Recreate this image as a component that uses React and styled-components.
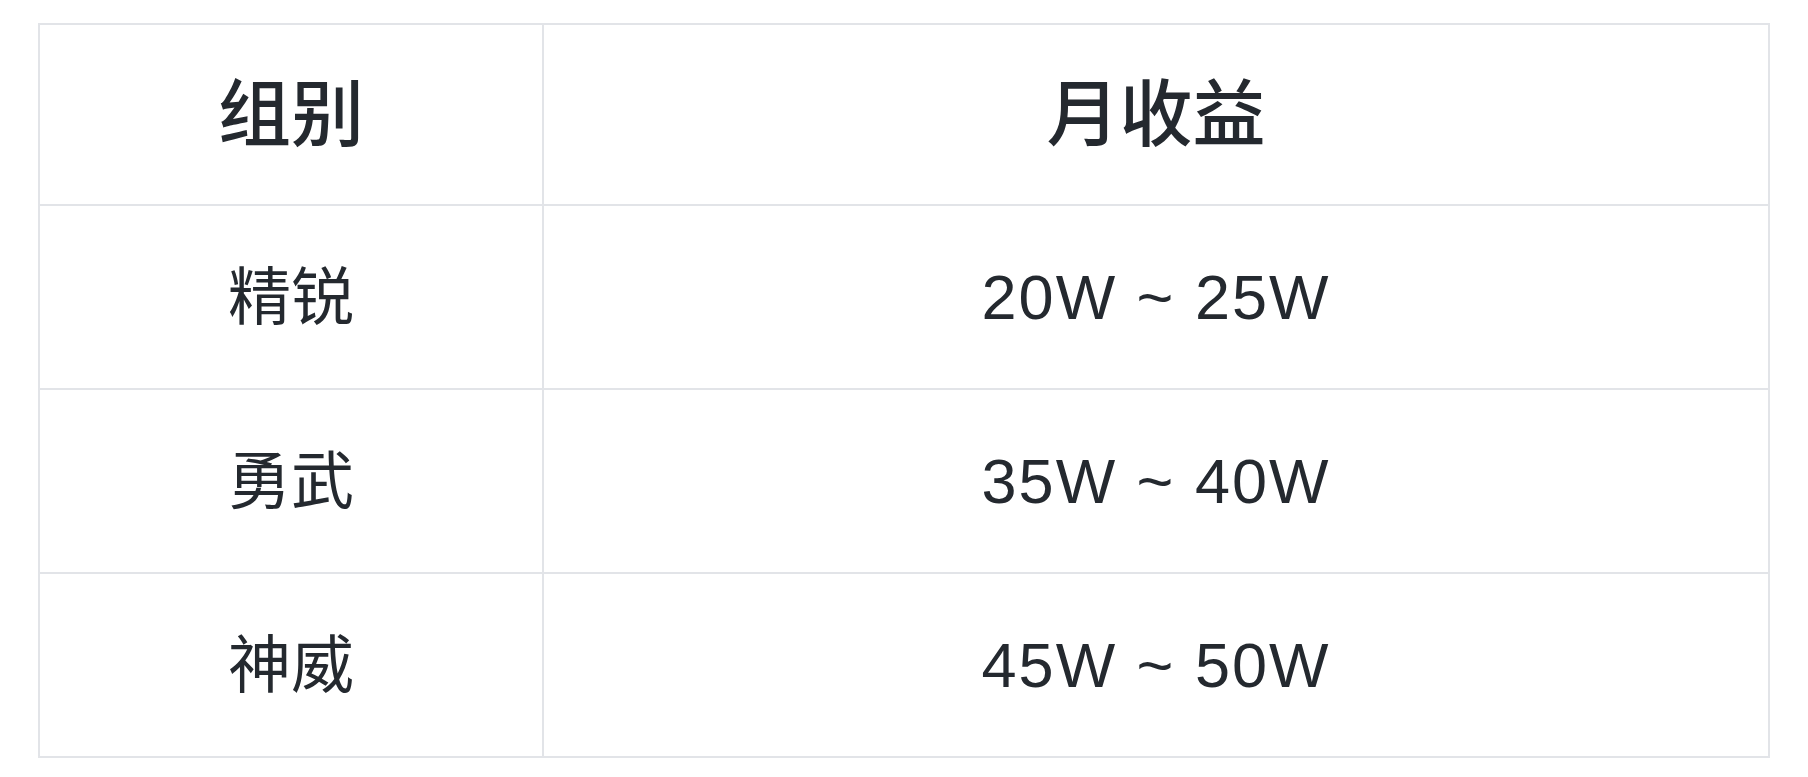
import React from 'react';
import styled, { createGlobalStyle } from 'styled-components';

const GlobalStyle = createGlobalStyle`
  html, body {
    margin: 0;
    padding: 0;
    background: #ffffff;
  }
`;

const Page = styled.div`
  padding: 23px 38px 0 38px;
  font-family: "Liberation Sans", "Noto Sans CJK SC", sans-serif;
  color: #24292f;
`;

const Table = styled.table`
  width: 100%;
  border-collapse: collapse;
  table-layout: fixed;
  border: 2px solid #e2e4e8;
`;

const Cell = styled.td`
  height: ${props => (props.head ? '179px' : '182px')};
  padding: 0;
  border: 2px solid #e2e4e8;
  text-align: center;
  vertical-align: middle;
  font-size: ${props => (props.head ? '73px' : '63px')};
  font-weight: ${props => (props.head ? 500 : 400)};
  letter-spacing: ${props => (props.num ? '2px' : '0')};
  line-height: 1;
`;

const rows = [
  { group: '精锐', income: '20W ~ 25W' },
  { group: '勇武', income: '35W ~ 40W' },
  { group: '神威', income: '45W ~ 50W' },
];

export default function App() {
  return (
    <>
      <GlobalStyle />
      <Page>
        <Table>
          <colgroup>
            <col style={{ width: '504px' }} />
            <col />
          </colgroup>
          <thead>
            <tr>
              <Cell as="th" head>组别</Cell>
              <Cell as="th" head>月收益</Cell>
            </tr>
          </thead>
          <tbody>
            {rows.map(row => (
              <tr key={row.group}>
                <Cell>{row.group}</Cell>
                <Cell num>{row.income}</Cell>
              </tr>
            ))}
          </tbody>
        </Table>
      </Page>
    </>
  );
}
